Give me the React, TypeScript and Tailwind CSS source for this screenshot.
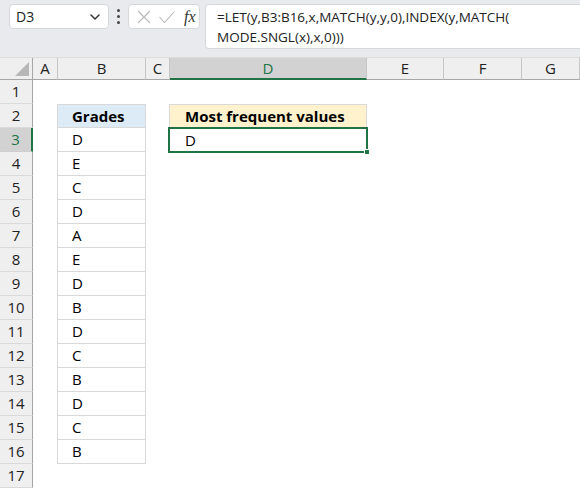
import { ChevronDown } from "lucide-react";

const FONT = { fontFamily: '"Open Sans", "Liberation Sans", sans-serif' };

const cols = [
  { key: "A", w: "w-[25px]" },
  { key: "B", w: "w-[88px]" },
  { key: "C", w: "w-[24px]" },
  { key: "D", w: "w-[197px]" },
  { key: "E", w: "w-[77px]" },
  { key: "F", w: "w-[78px]" },
  { key: "G", w: "flex-1" },
];

const grades = ["D", "E", "C", "D", "A", "E", "D", "B", "D", "C", "B", "D", "C", "B"];

function Toolbar() {
  return (
    <div className="flex h-[57px] items-start bg-[#e8eaee] pt-[4px]">
      <div className="ml-[9px] flex h-[25px] w-[100px] items-center justify-between rounded-[4px] border border-[#d6d8dc] bg-white pl-[6px] pr-[5px]">
        <span className="text-[14px] text-[#222]">D3</span>
        <ChevronDown className="h-4 w-4 text-[#333]" strokeWidth={2.2} />
      </div>
      <div className="mx-[8px] flex h-[25px] flex-col items-center justify-center gap-[3px]">
        <span className="h-[3px] w-[3px] rounded-full bg-[#444]" />
        <span className="h-[3px] w-[3px] rounded-full bg-[#444]" />
        <span className="h-[3px] w-[3px] rounded-full bg-[#444]" />
      </div>
      <div className="flex h-[25px] w-[72px] items-center gap-[6px] rounded-[4px] border border-[#d6d8dc] bg-white pl-[7px]">
        <svg width="16" height="16" viewBox="0 0 16 16" className="text-[#b8b8b8]">
          <path d="M2 2 L14 14 M14 2 L2 14" stroke="currentColor" strokeWidth="1.1" fill="none" />
        </svg>
        <svg width="18" height="16" viewBox="0 0 18 16" className="text-[#b8b8b8]">
          <path d="M1.5 8 L6.5 13.5 L16.5 2.5" stroke="currentColor" strokeWidth="1.1" fill="none" />
        </svg>
        <span
          className="ml-[2px] text-[16px] italic text-[#333]"
          style={{ fontFamily: '"Liberation Serif", serif' }}
        >
          fx
        </span>
      </div>
      <div className="ml-[5px] flex h-[45px] flex-1 flex-col justify-center rounded-l-[4px] border border-r-0 border-[#d6d8dc] bg-white pl-[11px] text-[13.5px] leading-[20px] text-[#222]">
        <span>=LET(y,B3:B16,x,MATCH(y,y,0),INDEX(y,MATCH(</span>
        <span>MODE.SNGL(x),x,0)))</span>
      </div>
    </div>
  );
}

function HeaderRow() {
  return (
    <div className="flex h-[23px] border-t border-[#dcdcdc] bg-[#efefef]">
      <div className="relative w-[33px] border-r border-b border-[#a6a6a6]">
        <svg width="14" height="14" viewBox="0 0 14 14" className="absolute right-[3px] bottom-[3px]">
          <path d="M14 0 L14 14 L0 14 Z" fill="#b7b7b7" />
        </svg>
      </div>
      {cols.map((c) =>
        c.key === "D" ? (
          <div
            key={c.key}
            className={`${c.w} flex items-center justify-center border-r border-b-2 border-r-[#c6c6c6] border-b-[#217346] bg-[#d2d2d2] text-[15px] text-[#217346]`}
          >
            {c.key}
          </div>
        ) : (
          <div
            key={c.key}
            className={`${c.w} flex items-center justify-center border-r border-b border-r-[#c6c6c6] border-b-[#a6a6a6] text-[15px] text-[#222]`}
          >
            {c.key}
          </div>
        )
      )}
    </div>
  );
}

function RowHeader({ n }: { n: number }) {
  if (n === 3) {
    return (
      <div className="flex w-[33px] items-center justify-center border-r-2 border-b border-r-[#217346] border-b-[#cfcfcf] bg-[#d2d2d2] text-[15px] text-[#217346]">
        {n}
      </div>
    );
  }
  return (
    <div className="flex w-[33px] items-center justify-center border-r border-b border-r-[#a6a6a6] border-b-[#dadada] bg-[#efefef] text-[15px] text-[#222]">
      {n}
    </div>
  );
}

function Row({ n }: { n: number }) {
  const grade = n >= 3 && n <= 16 ? grades[n - 3] : null;
  return (
    <div className="flex h-[24px]">
      <RowHeader n={n} />
      <div className="w-[25px]" />
      {n === 2 ? (
        <div className="-ml-[1px] flex w-[89px] items-center border border-[#d9d9d9] bg-[#ddebf7] pl-[14px] text-[15px] font-bold text-black">
          Grades
        </div>
      ) : grade ? (
        <div className="-ml-[1px] flex w-[89px] items-center border border-t-0 border-[#d9d9d9] pl-[14px] text-[15px] text-black">
          {grade}
        </div>
      ) : (
        <div className="w-[88px]" />
      )}
      <div className="w-[24px]" />
      {n === 2 ? (
        <div className="-ml-[1px] flex w-[198px] items-center border border-b-0 border-[#d9d9d9] bg-[#fff2cc] pl-[15px] text-[15px] font-bold text-black">
          Most frequent values
        </div>
      ) : n === 3 ? (
        <div className="relative flex w-[197px] items-center pl-[15px] text-[15px] text-black">
          D
          <div className="pointer-events-none absolute -top-[1px] -left-[2px] -right-[1px] -bottom-[1px] border-2 border-[#217346]" />
          <div className="absolute -right-[3px] -bottom-[3px] h-[6px] w-[6px] border border-white bg-[#217346]" />
        </div>
      ) : (
        <div className="w-[197px]" />
      )}
      <div className="flex-1" />
    </div>
  );
}

export default function App() {
  return (
    <div className="h-[489px] w-[580px] overflow-hidden bg-white" style={FONT}>
      <Toolbar />
      <HeaderRow />
      {Array.from({ length: 17 }, (_, i) => (
        <Row key={i + 1} n={i + 1} />
      ))}
    </div>
  );
}
